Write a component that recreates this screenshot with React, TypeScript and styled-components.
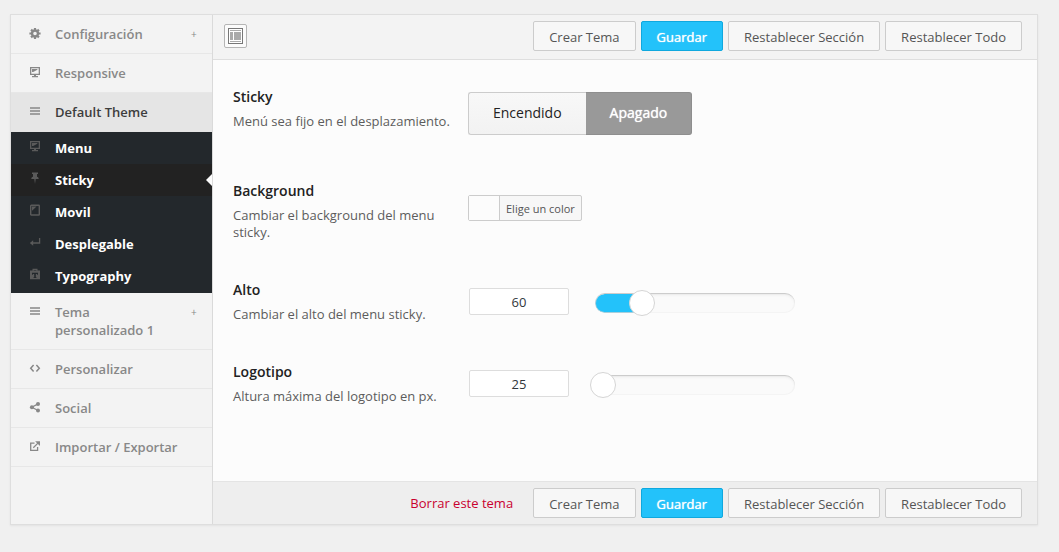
import React, { useState } from "react";
import styled, { createGlobalStyle, css } from "styled-components";

const GlobalStyle = createGlobalStyle`
  *, *::before, *::after { box-sizing: border-box; }
  body {
    margin: 0;
    background: #f0f0f0;
    font-family: "Open Sans", sans-serif;
    font-size: 13px;
    color: #555;
  }
  button, input { font-family: inherit; }
`;

const Page = styled.div`
  padding: 14px 21px 27px 10px;
`;

const Panel = styled.div`
  display: grid;
  grid-template-columns: 201px minmax(0, 1fr);
  border: 1px solid #dedede;
  background: #f3f3f3;
  box-shadow: 0 1px 2px rgba(0, 0, 0, 0.06);
`;

const Sidebar = styled.nav`
  min-width: 0;
`;

const MenuList = styled.ul`
  margin: 0;
  padding: 0;
  list-style: none;
`;

const MenuItem = styled.li<{ $open?: boolean }>`
  border-bottom: ${(p) => (p.$open ? "0" : "1px solid #e7e7e7")};
`;

const MenuLink = styled.a<{ $open?: boolean; $expandable?: boolean }>`
  display: grid;
  grid-template-columns: ${(p) => (p.$expandable ? "12px 122px 8px" : "12px 1fr")};
  column-gap: 14px;
  min-height: 38px;
  padding: 10px 12px 10px 18px;
  line-height: 18px;
  font-weight: 600;
  text-decoration: none;
  color: #888;
  ${(p) =>
    p.$open &&
    css`
      min-height: 39px;
      background: #e5e5e5;
      color: #3d3d3d;
    `}
`;

const MenuIcon = styled.svg`
  width: 12px;
  height: 12px;
  margin-top: 2px;
  fill: #888;
  stroke: #888;
`;

const Expand = styled.span`
  font-size: 10px;
  font-weight: 400;
  color: #888;
`;

const SubList = styled(MenuList)`
  padding-bottom: 1px;
  background: #23282c;
`;

const SubItem = styled.li<{ $active?: boolean }>`
  position: relative;
  ${(p) =>
    p.$active &&
    css`
      background: #222;
      &::after {
        content: "";
        position: absolute;
        right: 0;
        top: 10px;
        border: 6px solid transparent;
        border-left: 0;
        border-right-color: #fcfcfc;
      }
    `}
`;

const SubLink = styled.a`
  display: grid;
  grid-template-columns: 12px 1fr;
  column-gap: 14px;
  padding: 7px 18px;
  line-height: 18px;
  font-weight: 700;
  color: #fff;
  text-decoration: none;
  ${MenuIcon} {
    margin-top: 1px;
    fill: #5a5a5a;
    stroke: #5a5a5a;
  }
`;

const Main = styled.main`
  display: flex;
  flex-direction: column;
  min-width: 0;
  border-left: 1px solid #dadada;
  background: #fcfcfc;
`;

const Bar = styled.div<{ $bottom?: boolean }>`
  display: flex;
  align-items: center;
  gap: 5px;
  padding: 6px 15px 8px 11px;
  background: #f3f3f3;
  border-bottom: 1px solid #dedede;
  ${(p) =>
    p.$bottom &&
    css`
      padding: 6px 15px;
      background: #eee;
      border-top: 1px solid #e4e4e4;
      border-bottom: 0;
    `}
`;

const Spacer = styled.div`
  flex: 1;
`;

const LayoutToggle = styled.button`
  display: flex;
  align-items: center;
  justify-content: center;
  width: 23px;
  height: 24px;
  padding: 0;
  border: 1px solid #b5b5b5;
  border-radius: 2px;
  background: #fbfbfb;
`;

const Button = styled.button<{ $primary?: boolean }>`
  height: 30px;
  padding: 2px 15px 0;
  border: 1px solid #ccc;
  border-radius: 2px;
  background: #f7f7f7;
  color: #555;
  font-size: 13px;
  line-height: 26px;
  white-space: nowrap;
  ${(p) =>
    p.$primary &&
    css`
      background: #23c2fa;
      border-color: #0fa8de;
      color: #fff;
      font-weight: 500;
      text-shadow: 0 0 1px #fff;
    `}
`;

const DeleteLink = styled.a`
  margin-right: 15px;
  color: #c9002f;
  text-decoration: none;
  white-space: nowrap;
`;

const Fields = styled.div`
  flex: 1;
  display: flex;
  flex-direction: column;
  gap: 38px;
  padding: 27px 20px 75px;
`;

const Field = styled.div`
  display: grid;
  grid-template-columns: 220px minmax(0, 1fr);
  column-gap: 15px;
`;

const FieldTitle = styled.label`
  display: block;
  margin-bottom: 6px;
  font-size: 14px;
  line-height: 20px;
  font-weight: 600;
  color: #222;
`;

const Description = styled.p`
  margin: 0 0 1px;
  line-height: 17px;
  color: #5c5c5c;
`;

const Control = styled.div<{ $top: number }>`
  display: flex;
  align-items: flex-start;
  padding-top: ${(p) => p.$top}px;
`;

const Switch = styled.div`
  display: flex;
  margin-bottom: 8px;
`;

const SwitchButton = styled.button<{ $on: boolean }>`
  height: 43px;
  padding: 0 24px 2px;
  border: 1px solid #ccc;
  background: linear-gradient(#f8f8f8, #f2f2f2);
  color: #222;
  font-size: 14px;
  &:first-child {
    border-right: 0;
    border-radius: 3px 0 0 3px;
  }
  &:last-child {
    border-left: 0;
    border-radius: 0 3px 3px 0;
  }
  ${(p) =>
    p.$on &&
    css`
      background: #999;
      border-color: #8e8e8e;
      color: #fff;
      font-weight: 500;
      text-shadow: 0 0 1px #fff;
    `}
`;

const ColorButton = styled.button`
  display: flex;
  height: 26px;
  padding: 0;
  border: 1px solid #ccc;
  border-radius: 2px;
  background: #f7f7f7;
  color: #555;
  font-size: 11px;
  line-height: 26px;
`;

const Swatch = styled.span`
  width: 31px;
  height: 24px;
  border-right: 1px solid #ccc;
  background: #fcfcfc;
`;

const ColorText = styled.span`
  padding: 0 6px;
`;

const NumberInput = styled.input`
  width: 100px;
  height: 27px;
  margin: 0 21px 0 1px;
  padding: 0;
  border: 1px solid #ddd;
  border-radius: 2px;
  background: #fff;
  color: #32373c;
  font-size: 13px;
  text-align: center;
`;

const Slider = styled.div`
  display: grid;
  align-items: center;
  width: 210px;
  margin-top: 2px;
  & > * {
    grid-area: 1 / 1;
  }
`;

const Rail = styled.div`
  height: 20px;
  margin: 0 5px;
  overflow: hidden;
  border-top: 1px solid #ccc;
  border-radius: 10px;
  background: #fafafa;
  box-shadow: inset 0 1px 3px rgba(0, 0, 0, 0.06), inset 0 0 0 1px #f6f6f6;
`;

const Fill = styled.div`
  height: 100%;
  background: #23c2fa;
  border: 1px solid #a9cfdc;
  border-top: 0;
  border-radius: 10px 0 0 10px;
`;

const Range = styled.input`
  appearance: none;
  width: 100%;
  height: 26px;
  margin: 0;
  background: transparent;
  &::-webkit-slider-thumb {
    appearance: none;
    width: 26px;
    height: 26px;
    border: 1px solid #d5d5d5;
    border-radius: 50%;
    background: #fff;
  }
`;

const Monitor = () => (
  <MenuIcon viewBox="0 0 12 12" aria-hidden="true">
    <path
      stroke="none"
      fillRule="evenodd"
      d="M1 1h10v8H7v1h2v1.300H3V10h2V9H1zM2.300 2.300v5.400h7.400V2.300zM3 3h5.400v.8L4.200 6H3z"
    />
  </MenuIcon>
);

const Gear = () => (
  <MenuIcon viewBox="0 0 12 12" aria-hidden="true">
    <circle cx="6" cy="6.500" r="3" fill="none" strokeWidth="2.400" />
    <path
      fill="none"
      strokeWidth="2.200"
      d="M6 .9v2M6 10.100v1.900M.4 6.500h2M9.600 6.500h2M2.100 2.600l1.400 1.400M8.500 9l1.400 1.400M2.100 10.400L3.500 9M8.500 4l1.400-1.400"
    />
  </MenuIcon>
);

const Lines = () => (
  <MenuIcon viewBox="0 0 12 12" aria-hidden="true">
    <path fill="none" strokeWidth="1.600" d="M1 3h10M1 6h10M1 9h10" />
  </MenuIcon>
);

const Pin = () => (
  <MenuIcon viewBox="0 0 12 12" aria-hidden="true">
    <path
      stroke="none"
      d="M3 .5h6v1.600H8v2.700c1.200.4 1.700 1.100 1.700 2.200H6.700L6 12l-.7-5H2.300c0-1.100.5-1.800 1.700-2.200V2.100H3z"
    />
  </MenuIcon>
);

const Tablet = () => (
  <MenuIcon viewBox="0 0 12 12" aria-hidden="true">
    <rect x="1.700" y="1.200" width="8.600" height="9.800" rx=".6" fill="none" strokeWidth="1.400" />
    <path stroke="none" d="M3 2.500h4.500L3 6.800z" />
  </MenuIcon>
);

const Return = () => (
  <MenuIcon viewBox="0 0 12 12" aria-hidden="true">
    <path fill="none" strokeWidth="1.300" d="M10.600 2v5H3" />
    <path stroke="none" d="M.8 7l3.400-2.800v5.600z" />
  </MenuIcon>
);

const FontCase = () => (
  <MenuIcon viewBox="0 0 12 12" aria-hidden="true">
    <path
      stroke="none"
      fillRule="evenodd"
      d="M1 2.600h2.500V.7h5v1.900H11v8.700H1zM4.700 1.900v.7h2.600v-.7zM3 4.800v1.900h.9v-.8h1.300v3.400h-.7v.8h3v-.8h-.7V5.900h1.300v.8H9V4.800z"
    />
  </MenuIcon>
);

const Code = () => (
  <MenuIcon viewBox="0 0 12 12" aria-hidden="true">
    <path fill="none" strokeWidth="1.500" d="M4.600 3L1.700 6.200l2.900 3.200M7.400 3l2.900 3.200-2.900 3.200" />
  </MenuIcon>
);

const Share = () => (
  <MenuIcon viewBox="0 0 12 12" aria-hidden="true">
    <path fill="none" strokeWidth="1.200" d="M9 2.900L2.900 6.200 9 9.500" />
    <g stroke="none">
      <circle cx="9" cy="2.900" r="2" />
      <circle cx="2.900" cy="6.200" r="2" />
      <circle cx="9" cy="9.500" r="2" />
    </g>
  </MenuIcon>
);

const External = () => (
  <MenuIcon viewBox="0 0 12 12" aria-hidden="true">
    <path fill="none" strokeWidth="1.300" d="M5.500 3.200H1.700v7.200h6.900V7M4.300 7.800l4.900-4.900" />
    <path stroke="none" d="M6.100 1.200H11v4.900z" />
  </MenuIcon>
);

const LayoutIcon = () => (
  <svg width="15" height="16" viewBox="0 0 15 16" aria-hidden="true">
    <rect x=".5" y=".5" width="14" height="15" fill="#fff" stroke="#777" />
    <path fill="#aaa" d="M2 2h11v1H2zM2 4h3v8H2zM6 4h7v8H6zM2 13h11v1H2z" />
  </svg>
);

interface Entry {
  label: string;
  Icon: () => React.JSX.Element;
  expandable?: boolean;
  children?: { label: string; Icon: () => React.JSX.Element; active?: boolean }[];
}

const entries: Entry[] = [
  { label: "Configuración", Icon: Gear, expandable: true },
  { label: "Responsive", Icon: Monitor },
  {
    label: "Default Theme",
    Icon: Lines,
    children: [
      { label: "Menu", Icon: Monitor },
      { label: "Sticky", Icon: Pin, active: true },
      { label: "Movil", Icon: Tablet },
      { label: "Desplegable", Icon: Return },
      { label: "Typography", Icon: FontCase },
    ],
  },
  { label: "Tema personalizado 1", Icon: Lines, expandable: true },
  { label: "Personalizar", Icon: Code },
  { label: "Social", Icon: Share },
  { label: "Importar / Exportar", Icon: External },
];

const Actions = () => (
  <>
    <Button type="button">Crear Tema</Button>
    <Button type="button" $primary>
      Guardar
    </Button>
    <Button type="button">Restablecer Sección</Button>
    <Button type="button">Restablecer Todo</Button>
  </>
);

interface SliderFieldProps {
  id: string;
  title: string;
  description: string;
  initial: number;
}

const MIN = 25;
const MAX = 190;

const SliderField = ({ id, title, description, initial }: SliderFieldProps) => {
  const [value, setValue] = useState(initial);
  const percent = ((value - MIN) / (MAX - MIN)) * 100;
  return (
    <Field>
      <div>
        <FieldTitle htmlFor={id}>{title}</FieldTitle>
        <Description>{description}</Description>
      </div>
      <Control $top={8}>
        <NumberInput id={id} type="text" value={value} onChange={(e) => setValue(Number(e.target.value) || MIN)} />
        <Slider>
          <Rail>
            {percent > 0 && <Fill style={{ width: `calc(${percent}% + 5px)` }} />}
          </Rail>
          <Range
            type="range"
            aria-label={title}
            min={MIN}
            max={MAX}
            value={value}
            onChange={(e) => setValue(Number(e.target.value))}
          />
        </Slider>
      </Control>
    </Field>
  );
};

export default function App() {
  const [sticky, setSticky] = useState(false);
  return (
    <>
      <GlobalStyle />
      <Page>
        <Panel>
          <Sidebar>
            <MenuList>
              {entries.map(({ label, Icon, expandable, children }) => (
                <MenuItem key={label} $open={!!children}>
                  <MenuLink href="#" $open={!!children} $expandable={expandable}>
                    <Icon />
                    <span>{label}</span>
                    {expandable && <Expand>+</Expand>}
                  </MenuLink>
                  {children && (
                    <SubList>
                      {children.map((sub) => (
                        <SubItem key={sub.label} $active={sub.active}>
                          <SubLink href="#">
                            <sub.Icon />
                            {sub.label}
                          </SubLink>
                        </SubItem>
                      ))}
                    </SubList>
                  )}
                </MenuItem>
              ))}
            </MenuList>
          </Sidebar>
          <Main>
            <Bar>
              <LayoutToggle type="button" aria-label="Expandir">
                <LayoutIcon />
              </LayoutToggle>
              <Spacer />
              <Actions />
            </Bar>
            <Fields>
              <Field>
                <div>
                  <FieldTitle as="div" id="sticky-title">Sticky</FieldTitle>
                  <Description>Menú sea fijo en el desplazamiento.</Description>
                </div>
                <Control $top={5}>
                  <Switch role="group" aria-labelledby="sticky-title">
                    <SwitchButton type="button" $on={sticky} aria-pressed={sticky} onClick={() => setSticky(true)}>
                      Encendido
                    </SwitchButton>
                    <SwitchButton type="button" $on={!sticky} aria-pressed={!sticky} onClick={() => setSticky(false)}>
                      Apagado
                    </SwitchButton>
                  </Switch>
                </Control>
              </Field>
              <Field>
                <div>
                  <FieldTitle htmlFor="background">Background</FieldTitle>
                  <Description>Cambiar el background del menu sticky.</Description>
                </div>
                <Control $top={14}>
                  <ColorButton type="button" id="background">
                    <Swatch />
                    <ColorText>Elige un color</ColorText>
                  </ColorButton>
                </Control>
              </Field>
              <SliderField id="height" title="Alto" description="Cambiar el alto del menu sticky." initial={60} />
              <SliderField id="logo" title="Logotipo" description="Altura máxima del logotipo en px." initial={25} />
            </Fields>
            <Bar $bottom>
              <Spacer />
              <DeleteLink href="#">Borrar este tema</DeleteLink>
              <Actions />
            </Bar>
          </Main>
        </Panel>
      </Page>
    </>
  );
}
